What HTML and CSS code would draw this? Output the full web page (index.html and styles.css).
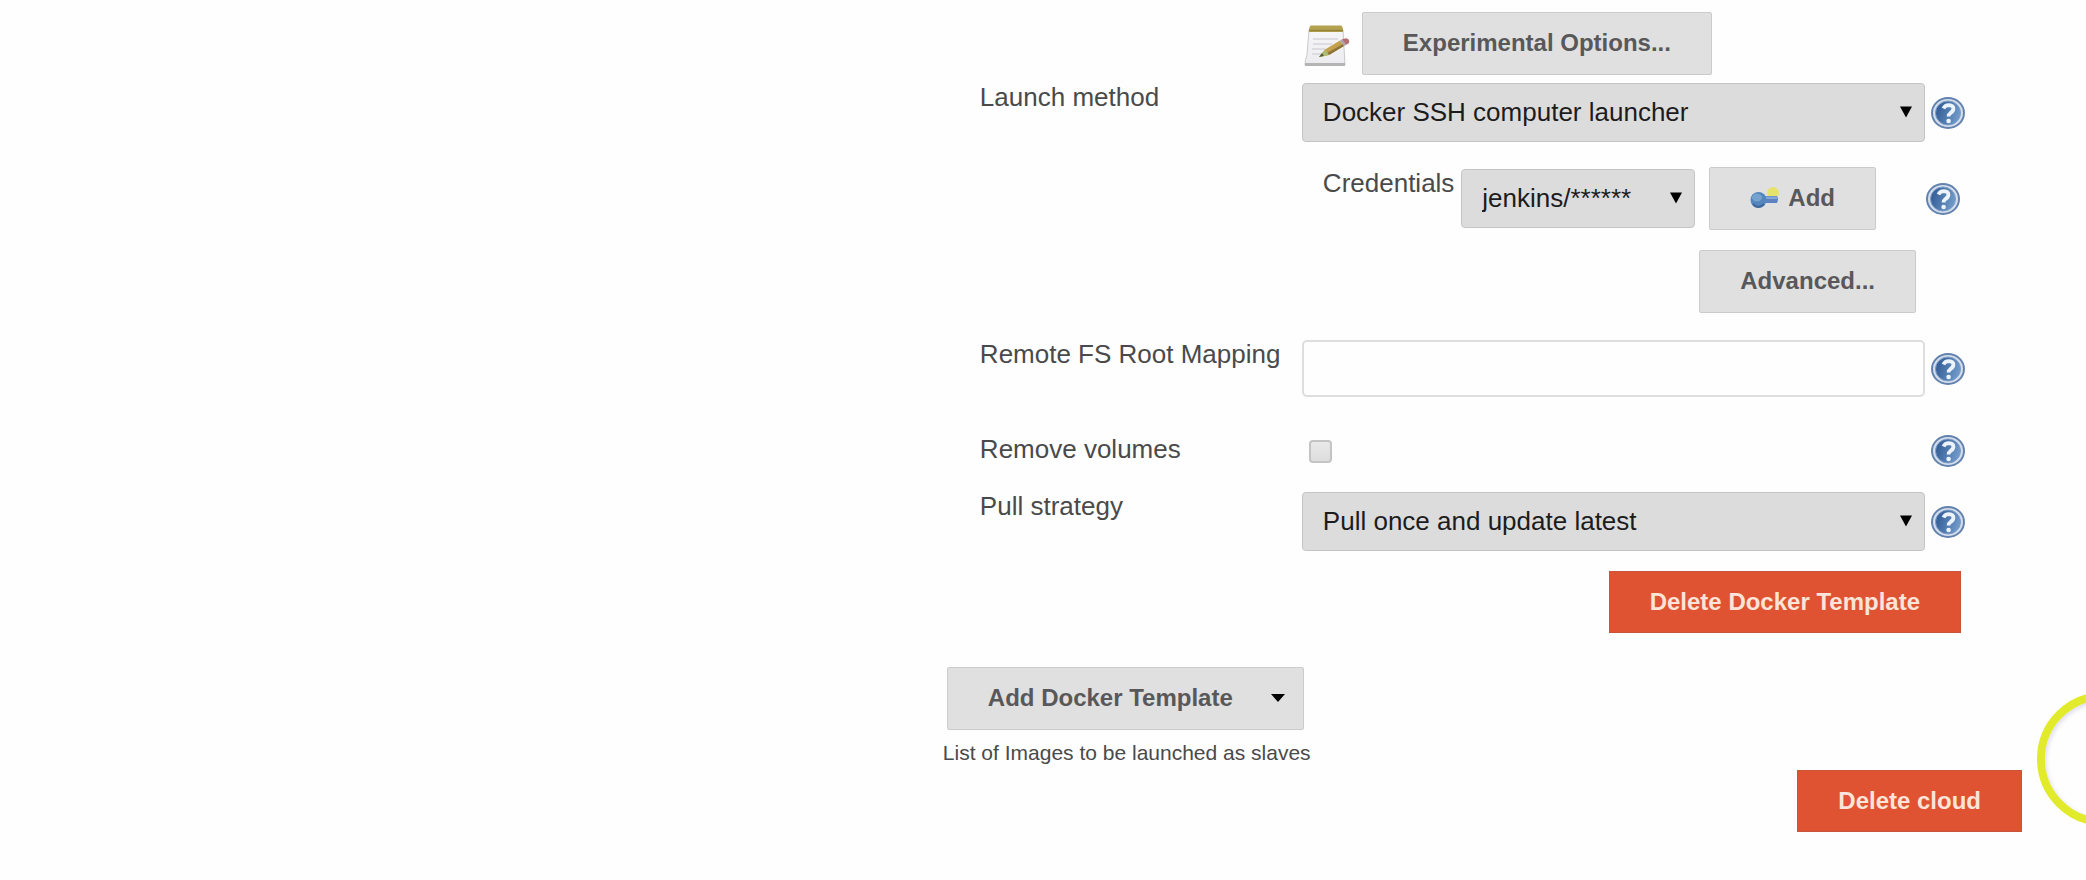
FILE: index.html
```html
<!DOCTYPE html>
<html lang="en">
<head>
<meta charset="utf-8">
<title>Docker cloud configuration</title>
<link rel="stylesheet" href="styles.css">
</head>
<body>
<svg class="defs" aria-hidden="true">
  <defs>
    <linearGradient id="disc" x1="0" y1="0" x2="1" y2="0.3">
      <stop offset="0" stop-color="#2c5590"/>
      <stop offset="1" stop-color="#6d97c6"/>
    </linearGradient>
    <linearGradient id="paper" x1="0" y1="0" x2="0" y2="1">
      <stop offset="0" stop-color="#f6f6f8"/>
      <stop offset="1" stop-color="#ececf0"/>
    </linearGradient>
    <symbol id="help" viewBox="0 0 34 32">
      <ellipse cx="17" cy="16" rx="16" ry="15" fill="#d3deec" stroke="#6382ae" stroke-width="2"/>
      <ellipse cx="17" cy="16" rx="12.5" ry="12" fill="url(#disc)" stroke="#7f9dc6"/>
      <path d="M12.5 11.5Q14 8.2 18 8.2Q22.6 8.4 22.4 12Q22.2 14.400 19.500 16Q17.600 17.200 17.600 19.500" fill="none" stroke="#edf3fb" stroke-width="3.800"/>
      <circle cx="17.600" cy="24" r="2.300" fill="#edf3fb"/>
    </symbol>
    <symbol id="caret" viewBox="0 0 12 12"><path d="M0 0.500H12L6 11.500Z"/></symbol>
  </defs>
</svg>

<form class="cloud">
  <div class="template">
    <div class="row row-tools">
      <div class="field tools">
        <svg class="notepad" viewBox="0 0 46 42" aria-hidden="true">
          <path d="M5 5H39L41 40H1Q1 34 3 30Z" fill="url(#paper)" stroke="#c9c9cb"/>
          <path d="M1 38H41V41H1Z" fill="#b5b4b2"/>
          <path d="M7 0.500H37Q39 0.500 39 7H5Q5 0.500 7 0.500Z" fill="#b5a24e"/>
          <path d="M5 5.500H39" stroke="#93853d" stroke-width="1.500"/>
          <path d="M9 14H34M9 19H28M8 24H21M8 29H17" stroke="#d5d5dc" stroke-width="1.500"/>
          <path d="M15 32L21 24.500L36 15.500L40 21L25 30Z" fill="#c5a14d"/>
          <path d="M25 30L40 21L39 19L23 28Z" fill="#8d7438"/>
          <path d="M15 32L21 24.500L25 30Z" fill="#aebb72"/>
          <path d="M15 32L18 28L20 31Z" fill="#55603c"/>
          <path d="M36 15.500L38 14.300L42 20L40 21Z" fill="#a9a4b4"/>
          <path d="M38 14.300L42 13.200Q46 14 45 18L42 20Z" fill="#b56f70"/>
        </svg>
        <button type="button" class="btn">Experimental Options...</button>
      </div>
    </div>

    <div class="row">
      <label class="label" for="launcher">Launch method</label>
      <div class="field select">
        <select id="launcher"><option>Docker SSH computer launcher</option></select>
        <svg class="caret" aria-hidden="true"><use href="#caret"/></svg>
      </div>
      <button type="button" class="help" aria-label="Help for launch method"><svg><use href="#help"/></svg></button>
    </div>

    <div class="credentials">
      <label class="label" for="credentials">Credentials</label>
      <div class="select credentials-select">
        <select id="credentials"><option>jenkins/******</option></select>
        <svg class="caret" aria-hidden="true"><use href="#caret"/></svg>
      </div>
      <button type="button" class="btn">
        <svg class="key" viewBox="0 0 30 24" aria-hidden="true">
          <circle cx="23" cy="7" r="6" fill="#e5e36b"/>
          <path d="M12 10H27Q29 13 27 17H12Z" fill="#5d82c0"/>
          <path d="M13 10.500H27V13H13Z" fill="#83a6d9"/>
          <ellipse cx="8.500" cy="14" rx="8" ry="8" fill="#5486bd"/>
          <ellipse cx="7" cy="11.500" rx="5" ry="4" fill="#76a2cf"/>
          <path d="M3 18Q8 24 14 18" fill="none" stroke="#3e6798" stroke-width="2"/>
        </svg>
        Add
      </button>
      <button type="button" class="help" aria-label="Help for credentials"><svg><use href="#help"/></svg></button>
    </div>

    <div class="advanced"><button type="button" class="btn">Advanced...</button></div>

    <div class="row row-root">
      <label class="label" for="root">Remote FS Root Mapping</label>
      <input class="field text" id="root" type="text">
      <button type="button" class="help" aria-label="Help for remote FS root mapping"><svg><use href="#help"/></svg></button>
    </div>

    <div class="row row-volumes">
      <label class="label" for="volumes">Remove volumes</label>
      <div class="field"><input class="check" id="volumes" type="checkbox"></div>
      <button type="button" class="help" aria-label="Help for remove volumes"><svg><use href="#help"/></svg></button>
    </div>

    <div class="row row-pull">
      <label class="label" for="pull">Pull strategy</label>
      <div class="field select">
        <select id="pull"><option>Pull once and update latest</option></select>
        <svg class="caret" aria-hidden="true"><use href="#caret"/></svg>
      </div>
      <button type="button" class="help" aria-label="Help for pull strategy"><svg><use href="#help"/></svg></button>
    </div>

    <div class="delete-template"><button type="button" class="btn danger">Delete Docker Template</button></div>
  </div>

  <div class="add-template">
    <button type="button" class="btn menu">Add Docker Template
      <svg class="menu-caret" viewBox="0 0 14 8" aria-hidden="true"><path d="M0 0H14L7 8Z"/></svg>
    </button>
    <p class="note">List of Images to be launched as slaves</p>
  </div>

  <div class="delete-cloud"><button type="button" class="btn danger">Delete cloud</button></div>
</form>
<div class="pointer-clip"><div class="pointer"></div></div>
</body>
</html>
```
FILE: styles.css
```css
* {
  box-sizing: border-box;
}

body {
  margin: 0;
  background: #fefefe;
  color: #4a4a4a;
  font-family: "Liberation Sans", Arial, sans-serif;
  font-size: 26px;
  line-height: 28px;
}

.defs {
  position: absolute;
  width: 0;
  height: 0;
}

.cloud {
  padding: 12px 64px 40px 45.2%;
}

.template {
  padding: 0 57px 0 37px;
}

.row {
  display: grid;
  grid-template-columns: 322px 1fr 40px;
  align-items: center;
}

.row-tools {
  margin-bottom: 8px;
}

.field {
  grid-column: 2;
}

.label {
  align-self: start;
  white-space: nowrap;
}

.tools {
  display: flex;
  align-items: center;
  gap: 12px;
  padding-left: 2px;
}

.notepad {
  width: 46px;
  height: 42px;
  margin-top: 4px;
}

.btn {
  display: inline-flex;
  align-items: center;
  gap: 8px;
  padding: 17px 40px 19px;
  border: 1px solid #cbcbcb;
  border-radius: 2px;
  background: #e0e0e0;
  color: #58585a;
  font: bold 24px/25px "Liberation Sans", Arial, sans-serif;
  white-space: nowrap;
}

.danger {
  padding-bottom: 18px;
  border-color: #c9543a;
  border-radius: 0;
  background: #df5333;
  color: #fde4d8;
}

.select {
  position: relative;
}

.select select {
  display: block;
  width: 100%;
  height: 59px;
  padding: 0 40px 2px 20px;
  appearance: none;
  border: 1px solid #c4c4c4;
  border-radius: 4px;
  background: #dcdcdc;
  color: #1c1c1c;
  font: 26px/30px "Liberation Sans", Arial, sans-serif;
}

.caret {
  position: absolute;
  top: 23px;
  right: 13px;
  width: 12px;
  height: 12px;
  pointer-events: none;
}

.help {
  justify-self: end;
  width: 34px;
  height: 32px;
  padding: 0;
  border: 0;
  background: none;
}

.help svg {
  display: block;
  width: 34px;
  height: 32px;
}

.credentials {
  display: flex;
  align-items: center;
  margin-top: 25px;
  padding: 0 5px 0 343px;
}

.credentials .label {
  padding-top: 2px;
}

.credentials-select {
  width: 234px;
  margin: 0 14px 0 auto;
}

.credentials .help {
  margin-left: 50px;
}

.key {
  width: 30px;
  height: 24px;
}

.advanced {
  display: flex;
  justify-content: flex-end;
  margin: 20px 49px 27px 0;
}

.text {
  width: 100%;
  height: 57px;
  padding: 0 20px;
  border: 2px solid #dedede;
  border-radius: 5px;
  background: #fefefe;
  font: 26px/30px "Liberation Sans", Arial, sans-serif;
}

.row-volumes {
  margin: 38px 0 25px;
}

.check {
  display: block;
  width: 23px;
  height: 23px;
  margin: 0 0 0 7px;
  appearance: none;
  border: 2px solid #c4c4c4;
  border-radius: 4px;
  background: linear-gradient(#e9e9e9, #dddddd);
}

.delete-template {
  display: flex;
  justify-content: flex-end;
  margin: 20px 4px 34px 0;
}

.add-template .btn {
  margin-left: 4px;
}

.menu {
  gap: 38px;
  padding-right: 18px;
}

.menu-caret {
  width: 14px;
  height: 8px;
}

.note {
  margin: 11px 0 5px;
  font-size: 21px;
  line-height: 24px;
}

.delete-cloud {
  display: flex;
  justify-content: flex-end;
}

/* Highlight ring around the mouse pointer, cut off by the window edge */
.pointer-clip {
  position: absolute;
  top: 680px;
  right: 0;
  width: 60px;
  height: 160px;
  overflow: hidden;
  pointer-events: none;
}

.pointer {
  position: absolute;
  top: 12px;
  left: 11px;
  width: 134px;
  height: 134px;
  border: 8px solid #e2ea2c;
  border-radius: 50%;
  box-shadow: inset 1px 2px 5px #dcd8ea;
}
```
